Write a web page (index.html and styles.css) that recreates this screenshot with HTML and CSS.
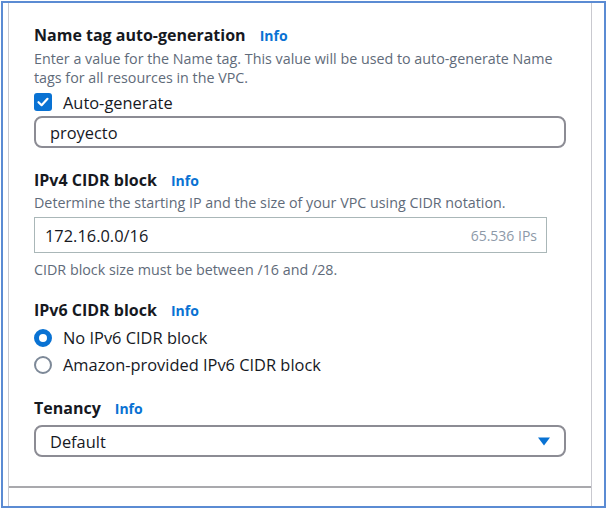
FILE: index.html
```html
<!DOCTYPE html>
<html>
<head>
<meta charset="utf-8">
<link rel="stylesheet" href="styles.css">
</head>
<body>
<div class="frame">
  <div class="panel">
    <div class="content">
      <section class="field f-name">
        <div class="label"><span class="label-text">Name tag auto-generation</span><a class="info">Info</a></div>
        <p class="desc">Enter a value for the Name tag. This value will be used to auto-generate Name tags for all resources in the VPC.</p>
        <div class="check-row">
          <span class="checkbox"><svg width="18" height="18" viewBox="0 0 18 18"><path d="M4.5 9.2 L7.6 12.2 L13.5 5.8" fill="none" stroke="#fff" stroke-width="2.2" stroke-linecap="round" stroke-linejoin="round"/></svg></span>
          <span class="check-label">Auto-generate</span>
        </div>
        <div class="input rounded"><span class="value">proyecto</span></div>
      </section>

      <section class="field f-ipv4">
        <div class="label"><span class="label-text">IPv4 CIDR block</span><a class="info">Info</a></div>
        <p class="desc">Determine the starting IP and the size of your VPC using CIDR notation.</p>
        <div class="input square"><span class="value">172.16.0.0/16</span><span class="suffix">65.536 IPs</span></div>
        <p class="constraint">CIDR block size must be between /16 and /28.</p>
      </section>

      <section class="field f-ipv6">
        <div class="label"><span class="label-text">IPv6 CIDR block</span><a class="info">Info</a></div>
        <div class="radio-row first"><span class="radio checked"></span><span class="radio-label">No IPv6 CIDR block</span></div>
        <div class="radio-row"><span class="radio"></span><span class="radio-label">Amazon-provided IPv6 CIDR block</span></div>
      </section>

      <section class="field f-tenancy">
        <div class="label"><span class="label-text">Tenancy</span><a class="info">Info</a></div>
        <div class="input rounded select"><span class="value">Default</span><svg class="caret" width="12" height="9" viewBox="0 0 12 9"><path d="M0 0.5 H12 L6 8.5 Z" fill="#0972d3"/></svg></div>
      </section>
    </div>
    <div class="divider"></div>
  </div>
</div>
</body>
</html>
```

FILE: styles.css
```css
html, body {
  margin: 0;
  padding: 0;
  background: #fff;
}
body {
  font-family: "Open Sans", "Noto Sans", sans-serif;
  color: #16191f;
}
.frame {
  margin: 1px 0 0 1px;
  width: 601px;
  height: 503px;
  border: 2px solid #5b8bd3;
  display: flex;
}
.panel {
  margin-left: 5px;
  width: 582px;
  border-left: 1px solid #c9c9cf;
  border-right: 1px solid #c9c9cf;
  display: flex;
  flex-direction: column;
}
.content {
  padding: 21px 24px 0 25px;
  height: 483px;
  box-sizing: border-box;
}
.divider {
  height: 2px;
  background: #a9a9ad;
}
.field {
  margin: 0;
}
.label {
  display: flex;
  align-items: flex-start;
  gap: 14px;
  height: 24px;
  line-height: 22px;
}
.f-name .label { height: 25px; }
.label-text {
  font-size: 16px;
  font-weight: 700;
  color: #16191f;
}
.info {
  font-size: 14px;
  font-weight: 700;
  color: #0972d3;
  padding-top: 1px;
}
.desc, .constraint {
  margin: 0;
  font-size: 14.3px;
  line-height: 19px;
  color: #5f6b7a;
}
.check-row, .radio-row {
  display: flex;
  align-items: center;
  gap: 11px;
  font-size: 16.4px;
}
.check-row { height: 24px; }
.radio-row { height: 27px; }
.checkbox {
  width: 18px;
  height: 18px;
  border-radius: 3px;
  background: #0972d3;
  display: flex;
}
.input {
  display: flex;
  align-items: center;
  box-sizing: border-box;
  font-size: 16.4px;
  color: #16191f;
}
.input.rounded {
  width: 532px;
  height: 32px;
  border: 2px solid #8c8c94;
  border-radius: 8px;
  padding: 0 14px;
}
.input.square {
  width: 513px;
  height: 36px;
  border: 1px solid #aab7b8;
  padding: 0 9px 0 10px;
}
.suffix {
  margin-left: auto;
  font-size: 14px;
  color: #8d99a8;
}
.select {
  justify-content: space-between;
  padding-right: 20px;
}
.f-name .check-row { margin-top: 3px; }
.f-name .input { margin-top: 2px; }
.f-ipv4 { margin-top: 21px; }
.f-ipv4 .input { margin-top: 5px; }
.f-ipv4 .constraint { margin-top: 7px; }
.f-ipv6 { margin-top: 20px; }
.f-ipv6 .radio-row.first { margin-top: 1px; }
.radio {
  width: 18px;
  height: 18px;
  box-sizing: border-box;
  border-radius: 50%;
  border: 2px solid #7d8998;
}
.radio.checked {
  border: 5px solid #0972d3;
}
.f-tenancy { margin-top: 19px; }
.f-tenancy .input { margin-top: 4px; }
```
